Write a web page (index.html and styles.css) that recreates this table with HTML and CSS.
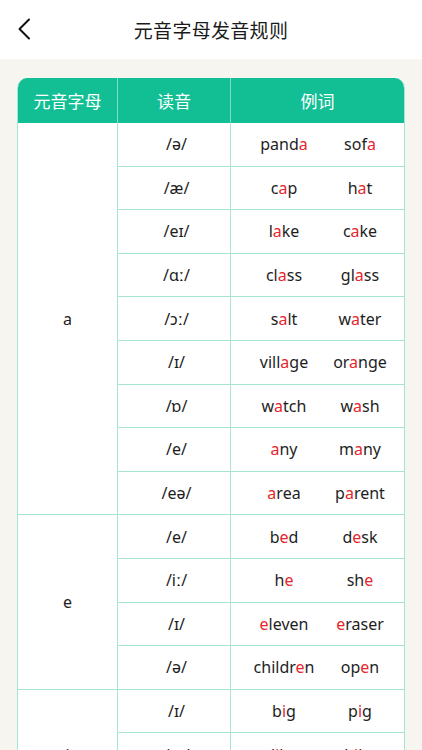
FILE: index.html
```html
<!DOCTYPE html>
<html lang="zh">
<head>
<meta charset="utf-8">
<title>元音字母发音规则</title>
<link rel="stylesheet" href="styles.css">
</head>
<body>
<header class="nav">
  <svg class="back" width="14" height="22" viewBox="0 0 14 22"><path d="M12 1.5 L2.5 11 L12 20.5" fill="none" stroke="#111" stroke-width="2" stroke-linecap="round" stroke-linejoin="round"/></svg>
  <h1 class="title">元音字母发音规则</h1>
</header>
<main class="content">
  <div class="card">
    <table class="rules">
      <colgroup><col class="c1"><col class="c2"><col class="c3"></colgroup>
      <thead>
        <tr><th>元音字母</th><th>读音</th><th>例词</th></tr>
      </thead>
      <tbody>
        <tr><td class="letter" rowspan="9">a</td><td class="ph">/ə/</td><td><div class="ex"><span>pand<b>a</b></span><span>sof<b>a</b></span></div></td></tr>
        <tr><td class="ph">/æ/</td><td><div class="ex"><span>c<b>a</b>p</span><span>h<b>a</b>t</span></div></td></tr>
        <tr><td class="ph">/eɪ/</td><td><div class="ex"><span>l<b>a</b>ke</span><span>c<b>a</b>ke</span></div></td></tr>
        <tr><td class="ph">/ɑː/</td><td><div class="ex"><span>cl<b>a</b>ss</span><span>gl<b>a</b>ss</span></div></td></tr>
        <tr><td class="ph">/ɔː/</td><td><div class="ex"><span>s<b>a</b>lt</span><span>w<b>a</b>ter</span></div></td></tr>
        <tr><td class="ph">/ɪ/</td><td><div class="ex"><span>vill<b>a</b>ge</span><span>or<b>a</b>nge</span></div></td></tr>
        <tr><td class="ph">/ɒ/</td><td><div class="ex"><span>w<b>a</b>tch</span><span>w<b>a</b>sh</span></div></td></tr>
        <tr><td class="ph">/e/</td><td><div class="ex"><span><b>a</b>ny</span><span>m<b>a</b>ny</span></div></td></tr>
        <tr class="end"><td class="ph">/eə/</td><td><div class="ex"><span><b>a</b>rea</span><span>p<b>a</b>rent</span></div></td></tr>
        <tr><td class="letter" rowspan="4">e</td><td class="ph">/e/</td><td><div class="ex"><span>b<b>e</b>d</span><span>d<b>e</b>sk</span></div></td></tr>
        <tr><td class="ph">/iː/</td><td><div class="ex"><span>h<b>e</b></span><span>sh<b>e</b></span></div></td></tr>
        <tr><td class="ph">/ɪ/</td><td><div class="ex"><span><b>e</b>leven</span><span><b>e</b>raser</span></div></td></tr>
        <tr class="end"><td class="ph">/ə/</td><td><div class="ex"><span>childr<b>e</b>n</span><span>op<b>e</b>n</span></div></td></tr>
        <tr><td class="letter" rowspan="3">i</td><td class="ph">/ɪ/</td><td><div class="ex"><span>b<b>i</b>g</span><span>p<b>i</b>g</span></div></td></tr>
        <tr><td class="ph">/aɪ/</td><td><div class="ex"><span>l<b>i</b>ke</span><span>b<b>i</b>ke</span></div></td></tr>
        <tr class="end"><td class="ph">/ə/</td><td><div class="ex"><span>penc<b>i</b>l</span><span>hol<b>i</b>day</span></div></td></tr>
      </tbody>
    </table>
  </div>
</main>
</body>
</html>
```
FILE: styles.css
```css
* { box-sizing: border-box; }
html, body { margin: 0; padding: 0; }
body {
  width: 422px;
  background: #f6f5ef;
  font-family: "Noto Sans", "Noto Sans CJK SC", sans-serif;
  color: #1e1e1e;
}
.nav {
  height: 59px;
  background: #ffffff;
  display: flex;
  align-items: center;
  justify-content: center;
  position: relative;
}
.back {
  position: absolute;
  left: 17px;
  top: 18px;
}
.title {
  margin: 0;
  font-size: 19px;
  font-weight: 400;
  color: #1a1a1a;
  letter-spacing: 0.3px;
}
.content {
  padding: 19px 17px 0 17px;
}
.card {
  width: 388px;
  border-radius: 10px 10px 0 0;
  overflow: hidden;
  background: #fff;
  border-left: 1px solid #a6e4d3;
  border-right: 1px solid #a6e4d3;
}
.rules {
  width: 100%;
  border-collapse: separate;
  border-spacing: 0;
  table-layout: fixed;
}
.c1 { width: 100px; }
.c2 { width: 113px; }
.c3 { width: 173px; }
.rules th {
  height: 45px;
  background: #12bf95;
  color: #ffffff;
  font-size: 17px;
  font-weight: 400;
  text-align: center;
  border-right: 1px solid #7fdcc2;
  padding: 0;
}
.rules th:last-child { border-right: none; }
.rules td {
  height: 43.6px;
  padding: 0;
  text-align: center;
  vertical-align: middle;
  font-size: 16px;
  border-right: 1px solid #a6e4d3;
  border-bottom: 1px solid #a6e4d3;
}
.rules td.ph { padding-left: 5px; }
.rules td:last-child { border-right: none; }
.rules .letter { border-bottom: 1.5px solid #a6e4d3; }
.rules tr.end td { border-bottom: 1.5px solid #a6e4d3; }
.ex {
  display: grid;
  grid-template-columns: 76px 76px;
  justify-content: center;
  padding-left: 9px;
  font-size: 16px;
}
.ex span { text-align: center; white-space: nowrap; }
.ex b { font-weight: 400; color: #e8262d; }
```
